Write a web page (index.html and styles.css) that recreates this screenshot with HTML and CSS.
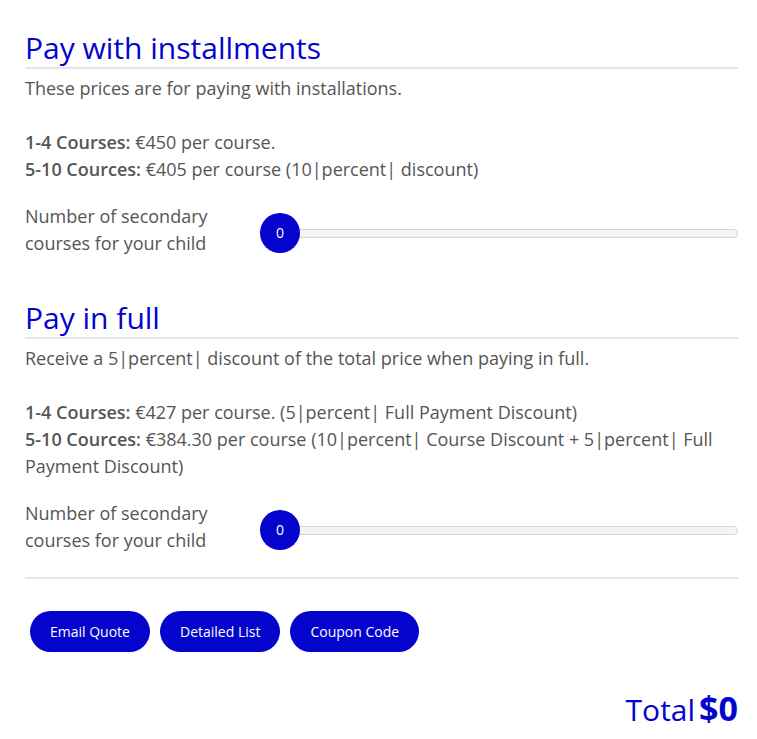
FILE: index.html
```html
<!DOCTYPE html>
<html lang="en">
<head>
<meta charset="utf-8">
<title>Pricing</title>
<link rel="stylesheet" href="styles.css">
</head>
<body>
<div class="calc">
  <section class="plan">
    <h2 class="plan-title">Pay with installments</h2>
    <p class="intro">These prices are for paying with installations.</p>
    <p class="prices"><strong>1-4 Courses:</strong> €450 per course.<br><strong>5-10 Cources:</strong> €405 per course (10|percent| discount)</p>
    <div class="slider-row">
      <div class="slider-label">Number of secondary courses for your child</div>
      <div class="slider">
        <div class="track"></div>
        <div class="thumb">0</div>
      </div>
    </div>
  </section>
  <section class="plan plan-second">
    <h2 class="plan-title">Pay in full</h2>
    <p class="intro">Receive a 5|percent| discount of the total price when paying in full.</p>
    <p class="prices"><strong>1-4 Courses:</strong> €427 per course. (5|percent| Full Payment Discount)<br><strong>5-10 Cources:</strong> €384.30 per course (10|percent| Course Discount + 5|percent| Full Payment Discount)</p>
    <div class="slider-row">
      <div class="slider-label">Number of secondary courses for your child</div>
      <div class="slider">
        <div class="track"></div>
        <div class="thumb">0</div>
      </div>
    </div>
  </section>
  <div class="actions">
    <button class="btn" type="button">Email Quote</button>
    <button class="btn" type="button">Detailed List</button>
    <button class="btn" type="button">Coupon Code</button>
  </div>
  <div class="total"><span class="total-label">Total</span><span class="total-value">$0</span></div>
</div>
</body>
</html>
```

FILE: styles.css
```css
* { box-sizing: border-box; }
html, body { margin: 0; padding: 0; background: #fff; }
body {
  font-family: "Open Sans", "Liberation Sans", sans-serif;
  color: #555;
  font-size: 18px;
}
.calc {
  width: 757px;
  padding: 30px 19px 0 25px;
}
.plan-title {
  margin: 0;
  font-size: 30px;
  font-weight: 400;
  line-height: 36px;
  color: #0404cc;
  padding-bottom: 1px;
  border-bottom: 2px solid #e6e6e6;
}
.plan-second { margin-top: 43px; }
.intro {
  margin: 6px 0 0;
  line-height: 27px;
}
.prices {
  margin: 27px 0 0;
  line-height: 27px;
}
.prices strong { font-weight: 600; }
.slider-row {
  display: flex;
  align-items: flex-start;
  margin-top: 20px;
}
.slider-label {
  width: 235px;
  flex: none;
  line-height: 27px;
  padding-right: 20px;
}
.slider {
  position: relative;
  flex: 1;
  height: 40px;
  margin-top: 10px;
  display: flex;
  align-items: center;
}
.track {
  flex: 1;
  margin-left: 20px;
  height: 9px;
  background: #f4f4f4;
  border: 1px solid #d4d4d4;
  border-radius: 5px;
}
.thumb {
  position: absolute;
  left: 0;
  top: 0;
  width: 40px;
  height: 40px;
  border-radius: 50%;
  background: #0404cc;
  color: #fff;
  font-size: 14px;
  line-height: 40px;
  text-align: center;
}
.actions {
  margin-top: 23px;
  border-top: 2px solid #e6e6e6;
  padding: 32px 0 0 5px;
  display: flex;
  gap: 10px;
}
.btn {
  font-family: "Open Sans", "Liberation Sans", sans-serif;
  font-size: 14px;
  line-height: 21px;
  padding: 10px 20px;
  border: none;
  border-radius: 21px;
  background: #0404cc;
  color: #fff;
  cursor: pointer;
}
.total {
  display: flex;
  justify-content: flex-end;
  align-items: baseline;
  gap: 4px;
  margin-top: 36px;
  color: #0404cc;
}
.total-label { font-size: 30px; line-height: 40px; }
.total-value { font-size: 34px; font-weight: 700; line-height: 40px; }
```
